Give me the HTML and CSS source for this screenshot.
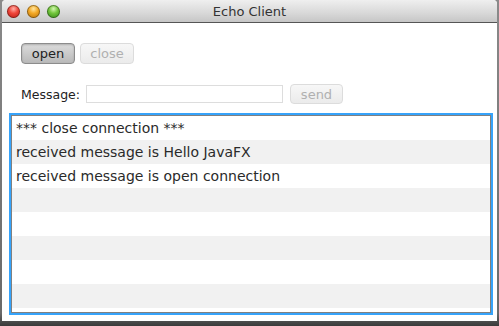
FILE: index.html
```html
<!DOCTYPE html>
<html lang="en">
<head>
    <meta charset="UTF-8">
    <title>Echo Client</title>
    <link rel="stylesheet" href="styles.css">
</head>
<body>
    <div class="window">
        <!-- Title bar -->
        <div class="titlebar">
            <div class="lights">
                <span class="light red"></span>
                <span class="light yellow"></span>
                <span class="light green"></span>
            </div>
            <div class="title">Echo Client</div>
            <div></div>
        </div>

        <div class="content">
            <div class="toolbar">
                <button class="btn pressed">open</button>
                <button class="btn disabled">close</button>
            </div>

            <div class="message-row">
                <label class="label">Message:</label>
                <input class="message-input" type="text">
                <button class="btn disabled send">send</button>
            </div>

            <!-- Log list -->
            <div class="list">
                <div class="row">*** close connection ***</div>
                <div class="row">received message is Hello JavaFX</div>
                <div class="row">received message is open connection</div>
                <div class="row"></div>
                <div class="row"></div>
                <div class="row"></div>
                <div class="row"></div>
                <div class="row"></div>
                <div class="row"></div>
            </div>
        </div>
    </div>
</body>
</html>
```

FILE: styles.css
```css
body {
    margin: 0;
    width: 499px;
    height: 326px;
    overflow: hidden;
    background: linear-gradient(#8a8a8a, #6a6a6a 96%, #3a3a3a);
    font-family: "DejaVu Sans", "Liberation Sans", sans-serif;
    color: #222;
}
.window {
    width: 495px;
    height: 321px;
    margin-left: 2px;
    background: #fff;
    border-radius: 4px 4px 0 0;
    overflow: hidden;
}
.titlebar {
    height: 22px;
    display: grid;
    grid-template-columns: 1fr auto 1fr;
    align-items: center;
    background: linear-gradient(#efefef, #d8d8d8 60%, #c6c6c6);
    border-bottom: 1px solid #555;
}
.lights {
    display: flex;
    gap: 7px;
    padding-left: 5px;
}
.light {
    width: 13px;
    height: 13px;
    border-radius: 50%;
    box-shadow: inset 0 0 0 1px rgba(0, 0, 0, 0.35);
}
.red {
    background: radial-gradient(circle at 50% 30%, #ffb0a8 0, #f0473c 40%, #b3160e 100%);
}
.yellow {
    background: radial-gradient(circle at 50% 30%, #ffe6a0 0, #f3a927 40%, #b06a06 100%);
}
.green {
    background: radial-gradient(circle at 50% 30%, #d4f7b2 0, #73c63c 40%, #2c7f12 100%);
}
.title {
    font-size: 13px;
    color: #333;
}
.content {
    padding: 20px 6px 0 9px;
}
.toolbar {
    display: flex;
    gap: 5px;
    padding-left: 10px;
}
.btn {
    font-family: inherit;
    font-size: 13px;
    width: 54px;
    height: 21px;
    padding: 0;
    border-radius: 4px;
}
.pressed {
    color: #222;
    border: 1px solid #8c8c8c;
    background: linear-gradient(#dcdcdc, #b9b9b9);
    box-shadow: inset 0 1px 2px rgba(0, 0, 0, 0.2);
}
.disabled {
    color: #b0b0b0;
    border: 1px solid #dcdcdc;
    background: linear-gradient(#f7f7f7, #ebebeb);
}
.message-row {
    display: flex;
    align-items: center;
    margin-top: 20px;
    padding-left: 10px;
    height: 20px;
}
.label {
    font-size: 12.5px;
    width: 65px;
}
.message-input {
    width: 197px;
    height: 18px;
    box-sizing: border-box;
    border: 1px solid #dddddd;
    margin: 0;
}
.send {
    width: 53px;
    height: 20px;
    margin-left: 7px;
}
.list {
    margin-top: 11px;
    height: 196px;
    border: 1px solid #808080;
    box-shadow: 0 0 0 2px #36a3fa;
    overflow: hidden;
}
.row {
    height: 24px;
    line-height: 24px;
    padding-left: 4px;
    font-size: 14px;
    color: #2a2a2a;
    background: #fff;
}
.row:nth-child(even) {
    background: #f1f1f1;
}
```
